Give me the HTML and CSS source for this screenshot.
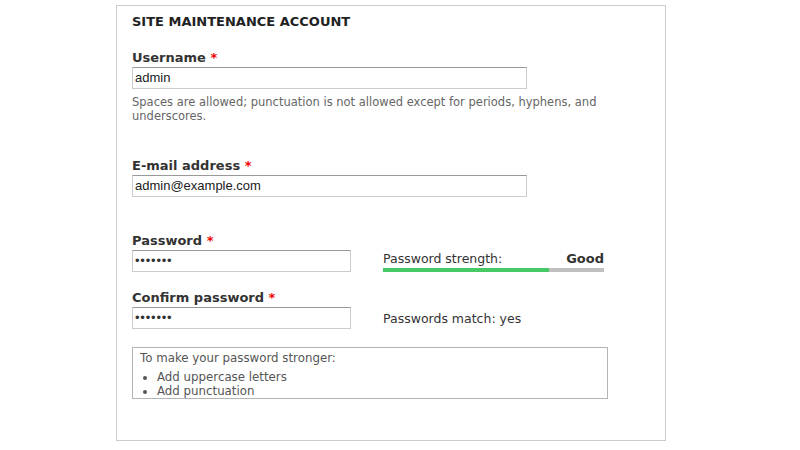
FILE: index.html
```html
<!DOCTYPE html>
<html>
<head>
<meta charset="utf-8">
<link rel="stylesheet" href="styles.css">
</head>
<body>
<div class="fieldset">
  <div class="legend">SITE MAINTENANCE ACCOUNT</div>

  <div class="item">
    <label class="label">Username <span class="req">*</span></label>
    <div class="input wide">admin</div>
    <div class="desc">Spaces are allowed; punctuation is not allowed except for periods, hyphens, and underscores.</div>
  </div>

  <div class="item email">
    <label class="label">E-mail address <span class="req">*</span></label>
    <div class="input wide">admin@example.com</div>
  </div>

  <div class="item pass row">
    <div class="col">
      <label class="label">Password <span class="req">*</span></label>
      <div class="input narrow dots">•••••••</div>
    </div>
    <div class="strength">
      <div class="strength-text"><span>Password strength:</span><b>Good</b></div>
      <div class="bar"><div class="fill" style="width:75%"></div></div>
    </div>
  </div>

  <div class="item confirm row">
    <div class="col">
      <label class="label">Confirm password <span class="req">*</span></label>
      <div class="input narrow dots">•••••••</div>
    </div>
    <div class="match">Passwords match: yes</div>
  </div>

  <div class="suggest">
    <div>To make your password stronger:</div>
    <ul>
      <li>Add uppercase letters</li>
      <li>Add punctuation</li>
    </ul>
  </div>
</div>
</body>
</html>
```
FILE: styles.css
```css
html, body {
  margin: 0;
  padding: 0;
  background: #fff;
}
body {
  font-family: "DejaVu Sans", Verdana, sans-serif;
  color: #333;
}
.fieldset {
  box-sizing: border-box;
  margin: 5px 0 0 116px;
  width: 550px;
  height: 436px;
  border: 1px solid #ccc;
  padding: 8px 15px 0 15px;
}
.legend {
  font-size: 13px;
  font-weight: bold;
  color: #222;
  line-height: 16px;
}
.item { margin-top: 20px; }
.label {
  display: block;
  font-size: 13px;
  font-weight: bold;
  line-height: 16px;
  margin-bottom: 1px;
  color: #333;
}
.req { color: #e00; }
.input {
  box-sizing: border-box;
  height: 22px;
  border: 1px solid #ccc;
  border-top-color: #999;
  font-family: "Liberation Sans", Arial, sans-serif;
  font-size: 13px;
  line-height: 20px;
  padding: 0 2px;
  color: #222;
}
.wide { width: 395px; }
.narrow { width: 219px; }
.dots { font-size: 13px; letter-spacing: 0.8px; color: #333; }
.desc {
  font-size: 11.5px;
  line-height: 14px;
  color: #666;
  margin-top: 6px;
  width: 480px;
}
.email { margin-top: 35px; }
.pass { margin-top: 36px; }
.confirm { margin-top: 18px; }
.row { display: flex; align-items: flex-end; gap: 32px; }
.strength { width: 221px; }
.strength-text {
  display: flex;
  justify-content: space-between;
  align-items: baseline;
  font-size: 12.5px;
  line-height: 14px;
}
.strength-text b { color: #333; font-size: 13px; }
.bar {
  margin-top: 2px;
  height: 4px;
  background: #c0c0c0;
}
.fill { height: 100%; background: #47c965; }
.match {
  font-size: 12.5px;
  line-height: 14px;
  margin-bottom: 3px;
}
.suggest {
  box-sizing: border-box;
  margin-top: 18px;
  width: 476px;
  height: 52px;
  border: 1px solid #b4b4b4;
  padding: 3px 7px;
  font-size: 11.8px;
  line-height: 14px;
  color: #555;
}
.suggest ul {
  margin: 5px 0 0 0;
  padding-left: 17px;
}
```
